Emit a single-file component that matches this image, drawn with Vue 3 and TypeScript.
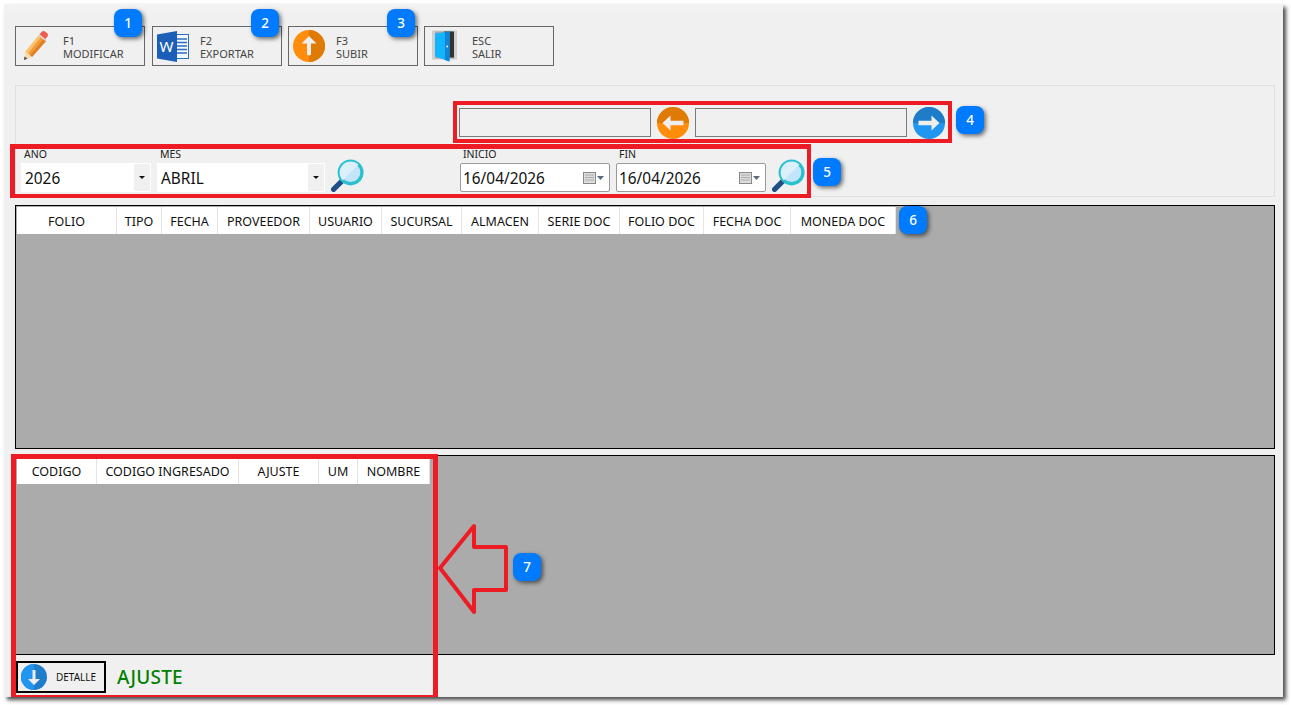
<template>
  <div class="window">
    <div class="toolbar">
      <button v-for="b in toolButtons" :key="b.key" class="tool-btn">
        <svg v-if="b.icon === 'pencil'" class="tool-icon" viewBox="0 0 32 32">
          <path d="M5.500 21.500 L19 5.500 L26 11 L12 27 Z" fill="#f29a3a" />
          <path d="M5.500 21.500 L19 5.500 L21 7 L8 23.500 Z" fill="#fcc36a" />
          <path d="M10 25.500 L23.500 9 L26 11 L12 27 Z" fill="#e07f24" />
          <path d="M19.500 4.500 L22 1.500 Q23.500 0.500 25 1.500 L27.500 3.500 Q28.500 5 27.500 6.500 L25 9.500 Z" fill="#ee5a4d" />
          <path d="M18.500 5.500 L19.500 4.300 L26.300 9.700 L25.300 11 Z" fill="#d4d4d4" />
          <path d="M4 30 L5.500 21.500 L12 27 Z" fill="#f6d9ae" />
          <path d="M4 30 L4.600 26.500 L7.400 28.800 Z" fill="#444" />
        </svg>
        <svg v-else-if="b.icon === 'word'" class="tool-icon" viewBox="0 0 32 32">
          <rect x="19" y="4.500" width="12.500" height="24" fill="#f4f8fc" stroke="#2a6fc2" />
          <path d="M20 9h10M20 12.500h10M20 16h10M20 19.500h10M20 23h10" stroke="#2a6fc2" stroke-width="1.600" />
          <path d="M0 4.500 L20 1 V32 L0 28.500 Z" fill="#1c5fb8" />
          <text x="2.500" y="21.500" class="word-letter">W</text>
        </svg>
        <svg v-else-if="b.icon === 'up'" class="tool-icon" viewBox="0 0 32 32">
          <circle cx="16" cy="16" r="16" fill="#ff8c0a" />
          <path d="M16 0 A16 16 0 0 1 16 32 Z" fill="#df7a05" />
          <path d="M16 6 L23.500 13.500 H18 V24.500 Q16 26.500 14 24.500 V13.500 H8.500 Z" fill="#eee" />
        </svg>
        <svg v-else class="tool-icon" viewBox="0 0 32 32">
          <rect x="3" y="0.500" width="25" height="29" fill="#cfcfcf" />
          <rect x="6" y="1.500" width="19" height="27" fill="#a9a9a9" />
          <rect x="15" y="1.500" width="10" height="26" fill="#333" />
          <path d="M6 3.500 L20.500 1.500 V31.500 L6 26.500 Z" fill="#12b4fb" />
          <path d="M16 2 L20.500 1.500 V31.500 L16 30 Z" fill="#1383d8" />
          <circle cx="18.200" cy="16.500" r="0.900" fill="#fff" />
        </svg>
        <span class="tool-label">{{ b.key }}<br />{{ b.label }}</span>
      </button>
    </div>

    <section class="filter-panel">
      <div class="nav-row">
        <div class="nav-input"></div>
        <svg class="nav-arrow" viewBox="0 0 32 32">
          <circle cx="16" cy="16" r="16" fill="#ff8c0a" />
          <path d="M0 16 A16 16 0 0 1 32 16 Z" fill="#df7a05" />
          <path d="M5.500 16 L13.500 8.500 V13.800 H26.500 V18.200 H13.500 V23.500 Z" fill="#eee" />
        </svg>
        <div class="nav-input wide"></div>
        <svg class="nav-arrow" viewBox="0 0 32 32">
          <circle cx="16" cy="16" r="16" fill="#2196f0" />
          <path d="M0 16 A16 16 0 0 1 32 16 Z" fill="#1f7cc9" />
          <path d="M26.500 16 L18.500 8.500 V13.800 H5.500 V18.200 H18.500 V23.500 Z" fill="#eee" />
        </svg>
      </div>

      <div class="search-row">
        <div class="field">
          <label>AÑO</label>
          <div class="combo year"><span>2026</span><i class="combo-btn"></i></div>
        </div>
        <div class="field">
          <label>MES</label>
          <div class="combo month"><span>ABRIL</span><i class="combo-btn"></i></div>
        </div>
        <svg class="lens" viewBox="0 0 32 32">
          <path d="M2.500 29.500 L11 21" stroke="#1f4f86" stroke-width="5" stroke-linecap="round" />
          <circle cx="19" cy="13" r="11" fill="#c4e4f9" stroke="#2bc0cf" stroke-width="3.200" />
          <path d="M11.500 20.500 A10.500 10.500 0 0 1 26.500 5.500 Z" fill="#dcf0fc" />
        </svg>
        <div class="field date-first">
          <label>INICIO</label>
          <div class="date-box">
            <span>16/04/2026</span>
            <svg class="cal" viewBox="0 0 21 12">
              <rect x="0.500" y="0.500" width="12" height="11" fill="#ddd" stroke="#888" />
              <path d="M2 3h9M2 5.500h9M2 8h9" stroke="#aaa" />
              <path d="M14 4h7l-3.500 4z" fill="#5a6a80" />
            </svg>
          </div>
        </div>
        <div class="field">
          <label>FIN</label>
          <div class="date-box">
            <span>16/04/2026</span>
            <svg class="cal" viewBox="0 0 21 12">
              <rect x="0.500" y="0.500" width="12" height="11" fill="#ddd" stroke="#888" />
              <path d="M2 3h9M2 5.500h9M2 8h9" stroke="#aaa" />
              <path d="M14 4h7l-3.500 4z" fill="#5a6a80" />
            </svg>
          </div>
        </div>
        <svg class="lens" viewBox="0 0 32 32">
          <path d="M2.500 29.500 L11 21" stroke="#1f4f86" stroke-width="5" stroke-linecap="round" />
          <circle cx="19" cy="13" r="11" fill="#c4e4f9" stroke="#2bc0cf" stroke-width="3.200" />
          <path d="M11.500 20.500 A10.500 10.500 0 0 1 26.500 5.500 Z" fill="#dcf0fc" />
        </svg>
      </div>
    </section>

    <section class="grid top-grid">
      <div class="grid-head">
        <div v-for="c in mainCols" :key="c.name" class="grid-col" :style="{ width: c.width + 'px' }">{{ c.name }}</div>
      </div>
    </section>

    <section class="grid bottom-grid">
      <div class="grid-head">
        <div v-for="c in detailCols" :key="c.name" class="grid-col" :style="{ width: c.width + 'px' }">{{ c.name }}</div>
      </div>
    </section>

    <div class="footer">
      <button class="detail-btn">
        <svg class="detail-icon" viewBox="0 0 26 26">
          <circle cx="13" cy="13" r="13" fill="#1f7cc9" />
          <path d="M13 0 A13 13 0 0 0 13 26 Z" fill="#2196f0" />
          <path d="M13 21 L7 15 H11.500 V6 H14.500 V15 H19 Z" fill="#eee" />
        </svg>
        <span>DETALLE</span>
      </button>
      <span class="status">AJUSTE</span>
    </div>
  </div>

  <!-- anotaciones del manual -->
  <div class="red-box box-4"></div>
  <div class="red-box box-5"></div>
  <div class="red-box box-7"></div>
  <svg class="red-arrow" viewBox="0 0 80 96" width="80" height="96">
    <path d="M2 45 L36 3 V24 H68 V67 H36 V89 Z" fill="none" stroke="#ed1c24" stroke-width="4" stroke-linejoin="round" />
  </svg>
  <div v-for="b in badges" :key="b.n" class="badge" :style="{ left: b.x + 'px', top: b.y + 'px' }">{{ b.n }}</div>
</template>

<script setup lang="ts">
const toolButtons = [
  { key: 'F1', label: 'MODIFICAR', icon: 'pencil' },
  { key: 'F2', label: 'EXPORTAR', icon: 'word' },
  { key: 'F3', label: 'SUBIR', icon: 'up' },
  { key: 'ESC', label: 'SALIR', icon: 'door' },
]

const mainCols = [
  { name: 'FOLIO', width: 100 },
  { name: 'TIPO', width: 45 },
  { name: 'FECHA', width: 56 },
  { name: 'PROVEEDOR', width: 92 },
  { name: 'USUARIO', width: 72 },
  { name: 'SUCURSAL', width: 80 },
  { name: 'ALMACEN', width: 77 },
  { name: 'SERIE DOC', width: 81 },
  { name: 'FOLIO DOC', width: 84 },
  { name: 'FECHA DOC', width: 87 },
  { name: 'MONEDA DOC', width: 105 },
]

const detailCols = [
  { name: 'CODIGO', width: 80 },
  { name: 'CODIGO INGRESADO', width: 142 },
  { name: 'AJUSTE', width: 80 },
  { name: 'UM', width: 39 },
  { name: 'NOMBRE', width: 72 },
]

const badges = [
  { n: 1, x: 114, y: 9 },
  { n: 2, x: 251, y: 9 },
  { n: 3, x: 387, y: 9 },
  { n: 4, x: 956, y: 106 },
  { n: 5, x: 813, y: 158 },
  { n: 6, x: 899, y: 206 },
  { n: 7, x: 513, y: 553 },
]
</script>

<style>
html,
body {
  height: 100%;
  margin: 0;
  background: #fff;
}
</style>

<style scoped>
.window {
  box-sizing: border-box;
  width: 1279px;
  height: 693px;
  margin: 4px 0 0 4px;
  padding: 22px 8px 0 11px;
  background: linear-gradient(#f5f2f2, #f0f0f0 12px);
  box-shadow: 3px 3px 4px rgba(0, 0, 0, 0.7);
  font-family: "Noto Sans", "Open Sans", sans-serif;
  overflow: hidden;
}

.toolbar {
  display: flex;
  gap: 6px;
  height: 40px;
}

.tool-btn {
  box-sizing: border-box;
  display: flex;
  align-items: center;
  width: 130px;
  height: 40px;
  padding: 0 0 0 4px;
  border: 1px solid #666;
  background: #f0f0f0;
  font: inherit;
  text-align: left;
}

.tool-btn:nth-child(1) {
  margin-right: 1px;
}

.tool-icon {
  width: 32px;
  height: 32px;
  flex-shrink: 0;
}

.tool-label {
  margin-left: 11px;
  padding-top: 2px;
  font-size: 11px;
  line-height: 13px;
  color: #444;
}

.filter-panel {
  box-sizing: border-box;
  height: 112px;
  margin-top: 19px;
  border: 1px solid #dfdfdf;
  padding: 22px 0 0 5px;
}

.nav-row {
  display: flex;
  align-items: center;
  gap: 6px;
  height: 29px;
  margin-left: 438px;
}

.nav-input {
  box-sizing: border-box;
  width: 192px;
  height: 29px;
  border: 1px solid #7a7a7a;
  background: #f0f0f0;
}

.nav-input.wide {
  width: 212px;
}

.nav-arrow {
  width: 32px;
  height: 32px;
  flex-shrink: 0;
}

.search-row {
  display: flex;
  align-items: flex-end;
  gap: 6px;
  height: 42px;
  margin-top: 13px;
}

.field {
  display: flex;
  flex-direction: column;
}

.field label {
  height: 13px;
  margin-left: 3px;
  margin-top: -2px;
  padding-bottom: 2px;
  font-size: 10.5px;
  line-height: 13px;
  color: #222;
}

.combo {
  display: flex;
  align-items: center;
  justify-content: space-between;
  box-sizing: border-box;
  height: 29px;
  padding-left: 4px;
  border: 1px solid #fff;
  border-left: 0;
  background: #fff;
  font-size: 15.4px;
  color: #111;
}

.combo span,
.date-box span {
  padding-top: 2px;
}

.combo.year {
  width: 130px;
}

.combo.month {
  width: 168px;
}

.combo-btn {
  position: relative;
  width: 16px;
  height: 27px;
  background: #f0f0f0;
}

.combo-btn::after {
  content: "";
  position: absolute;
  left: 5px;
  top: 12px;
  border: 3px solid transparent;
  border-top: 3px solid #111;
}

.lens {
  width: 33px;
  height: 33px;
  flex-shrink: 0;
}

.date-first {
  margin-left: 90px;
}

.date-box {
  display: flex;
  align-items: center;
  justify-content: space-between;
  box-sizing: border-box;
  width: 150px;
  height: 29px;
  padding: 0 5px 0 2px;
  border: 1px solid #9a9a9a;
  border-radius: 2px;
  background: #fff;
  font-size: 15.4px;
  color: #111;
}

.cal {
  width: 21px;
  height: 12px;
}

.grid {
  box-sizing: border-box;
  border: 1px solid #000;
  background: #ababab;
  padding: 1px;
}

.top-grid {
  height: 244px;
  margin-top: 8px;
}

.bottom-grid {
  height: 200px;
  margin-top: 6px;
}

.grid-head {
  display: flex;
  height: 27px;
}

.grid-col {
  box-sizing: border-box;
  flex-shrink: 0;
  background: #fff;
  border-right: 1px solid #e3e3e3;
  text-align: center;
  font-size: 12.5px;
  line-height: 29px;
  color: #111;
}

.footer {
  display: flex;
  align-items: center;
  gap: 11px;
  margin: 6px 0 0 1px;
}

.detail-btn {
  box-sizing: border-box;
  display: flex;
  align-items: center;
  width: 90px;
  height: 32px;
  padding: 0 0 0 3px;
  border: 2px solid #000;
  background: #f0f0f0;
  font: inherit;
}

.detail-icon {
  width: 26px;
  height: 26px;
  flex-shrink: 0;
}

.detail-btn span {
  margin-left: 9px;
  font-size: 10px;
  color: #111;
}

.status {
  font-size: 19px;
  font-weight: 500;
  letter-spacing: 0.2px;
  color: #008000;
}

.red-box {
  position: absolute;
  box-sizing: border-box;
  border: 4px solid #ed1c24;
}

.box-4 {
  left: 453px;
  top: 101px;
  width: 499px;
  height: 42px;
}

.box-5 {
  left: 10px;
  top: 144px;
  width: 801px;
  height: 54px;
  border-width: 5px 4px 4px 5px;
}

.box-7 {
  left: 11px;
  top: 454px;
  width: 427px;
  height: 243px;
  border-width: 5px 5px 2px 5px;
}

.red-arrow {
  position: absolute;
  left: 438px;
  top: 523px;
}

.word-letter {
  fill: #fff;
  font-family: "Noto Sans", sans-serif;
  font-size: 15px;
}

.badge {
  position: absolute;
  width: 28px;
  height: 28px;
  border-radius: 8px;
  background: #007bff;
  box-shadow: 2px 2px 4px rgba(0, 0, 0, 0.55);
  color: #fff;
  font-family: "Noto Sans", sans-serif;
  font-size: 13.500px;
  font-weight: 500;
  line-height: 28px;
  text-align: center;
}
</style>
